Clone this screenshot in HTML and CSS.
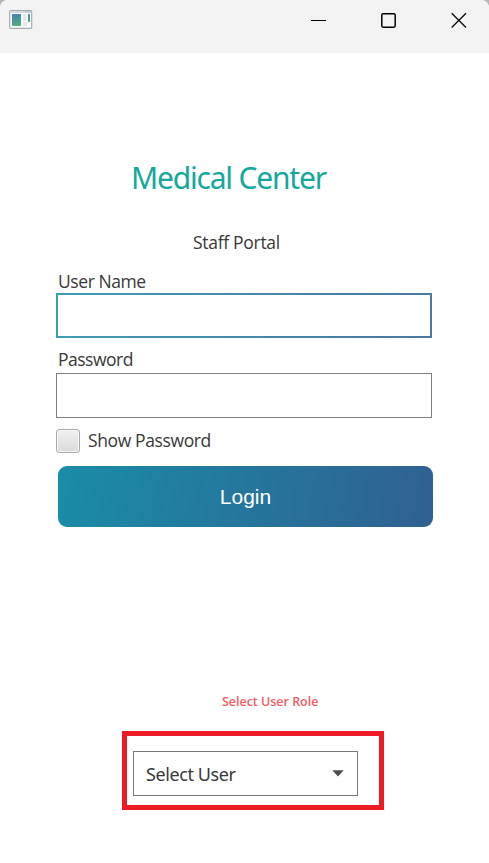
FILE: index.html
```html
<!DOCTYPE html>
<html lang="en">
<head>
<meta charset="utf-8">
<title>Medical Center</title>
<link rel="stylesheet" href="styles.css">
</head>
<body>
<div class="window">
  <header class="titlebar">
    <svg class="app-icon" width="24" height="20" viewBox="0 0 24 20">
      <defs>
        <linearGradient id="pane" x1="0" y1="0" x2=".4" y2="1"><stop offset="0" stop-color="#4a80b5"/><stop offset=".5" stop-color="#46969a"/><stop offset="1" stop-color="#55b277"/></linearGradient>
      </defs>
      <rect x=".7" y=".7" width="22" height="17.6" rx="1" fill="#fafbfc" stroke="#a3acb3" stroke-width="1.2"/>
      <path d="M1.3 1.3h21v1.7h-21z" fill="#d5dadd"/>
      <path d="M16 1.3h6v1h-6z" fill="#b2babf"/>
      <path d="M3 4h9v12H3zM19 4h2v8h-2z" fill="url(#pane)"/>
      <path d="M14 4h3v7h-3zM14 12h4v4h-4z" fill="#e6e6e6"/>
    </svg>
    <div class="controls">
      <svg width="16" height="16" viewBox="0 0 16 16"><path d="M0 8.5h15" stroke="#000"/></svg>
      <svg width="16" height="16" viewBox="0 0 16 16"><rect x=".8" y="1.8" width="13.4" height="13.4" rx="1.4" fill="none" stroke="#000" stroke-width="1.5"/></svg>
      <svg width="16" height="16" viewBox="0 0 16 16"><path d="M.7 1.2l14.3 14.3M15 1.2L.7 15.5" stroke="#111" stroke-width="1.4"/></svg>
    </div>
  </header>
  <main class="content">
    <h1 class="title">Medical Center</h1>
    <p class="subtitle">Staff Portal</p>
    <form class="form">
      <label class="label label-user" for="user">User Name</label>
      <input class="field field-active" id="user" type="text">
      <label class="label label-pass" for="pass">Password</label>
      <input class="field" id="pass" type="password">
      <div class="show"><span class="checkbox"></span><span class="show-text">Show Password</span></div>
      <button class="login" type="button"><span class="login-text">Login</span></button>
    </form>
    <p class="role">Select User Role</p>
    <div class="highlight">
      <div class="select">
        <span class="select-text">Select User</span>
        <svg width="12" height="7" viewBox="0 0 12 7"><path d="M.3.2h11.4L6 6.4z" fill="#4c4c4c"/></svg>
      </div>
    </div>
  </main>
</div>
</body>
</html>
```

FILE: styles.css
```css
* { box-sizing: border-box; }
body { margin: 0; background: #b5b5b5; }
.window {
  width: 489px;
  height: 863px;
  overflow: hidden;
  border-radius: 8px 8px 0 0;
  background: #fff;
  color: #383838;
  font: 18px/24px "Open Sans", "Noto Sans", sans-serif;
}
.titlebar {
  display: flex;
  justify-content: space-between;
  height: 53px;
  padding: 10px 22px 0 9px;
  background: #f3f3f3;
}
.controls { display: flex; gap: 54px; padding-top: 2px; }
.content { display: flex; flex-direction: column; }
.title {
  margin: 105px 0 0 131px;
  font: 400 30px/40px "Noto Sans", sans-serif;
  letter-spacing: -1.2px;
  color: #15a89d;
  white-space: nowrap;
}
.subtitle { margin: 32px 0 0 193px; letter-spacing: -0.3px; font-size: 17.5px; }
.form { display: flex; flex-direction: column; margin: 15px 0 0 56px; width: 377px; }
.label { height: 24px; margin-left: 2px; font-size: 17.5px; letter-spacing: -0.42px; }
.field {
  width: 376px;
  height: 45px;
  border: 1px solid #808080;
  background: #fff;
  outline: none;
}
.field-active {
  border: 2px solid transparent;
  border-image: linear-gradient(100deg, #3d9db5, #4c77a0) 1;
}
.label-pass { margin-top: 9px; height: 26px; letter-spacing: -0.5px; }
.show { display: flex; align-items: center; gap: 8px; height: 24px; margin-top: 11px; }
.show-text { margin-top: -2px; font-size: 17.5px; letter-spacing: -0.38px; }
.checkbox {
  width: 24px;
  height: 24px;
  border: 1px solid #aaa;
  border-radius: 3px;
  background: linear-gradient(#f1f1f1, #dadada);
  box-shadow: inset 0 0 0 1px #f7f7f7;
}
.login {
  width: 375px;
  height: 61px;
  margin: 13px 0 0 2px;
  padding: 0;
  border: 0;
  border-radius: 9px;
  background: linear-gradient(100deg, #1a8ca8, #306091);
  color: #fff;
  font: 21px/24px "Liberation Sans", Arial, sans-serif;
}
.role {
  margin: 163px 0 0 222px;
  font: 600 12.5px/24px "Open Sans", sans-serif;
  letter-spacing: -0.02px;
  color: #f55b64;
}
.highlight {
  width: 262px;
  height: 79px;
  margin: 17px 0 0 122px;
  padding: 15px 0 0 6px;
  border: 5px solid #ed1c24;
}
.select {
  display: flex;
  align-items: center;
  justify-content: space-between;
  width: 225px;
  height: 45px;
  padding: 0 13px 0 12px;
  border: 1px solid #777;
}
.select-text { font: 18px/24px "Noto Sans", sans-serif; letter-spacing: -0.4px; }
```
